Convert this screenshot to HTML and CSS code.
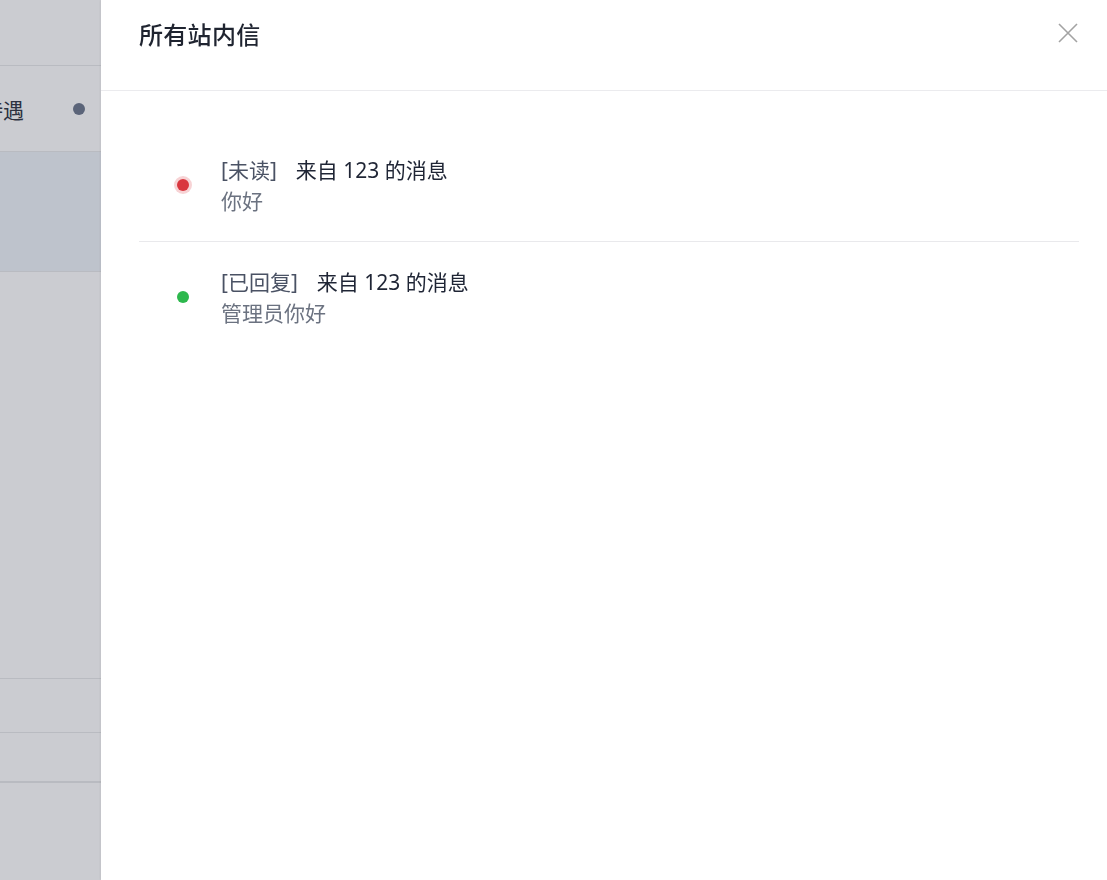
FILE: index.html
```html
<!DOCTYPE html>
<html lang="zh-CN">
<head>
<meta charset="utf-8">
<title>所有站内信</title>
<link rel="stylesheet" href="styles.css">
</head>
<body>
<div class="page">
  <aside class="side">
    <div class="side-top"></div>
    <div class="side-item">
      <span class="side-label">薪资待遇</span>
      <span class="side-dot"></span>
    </div>
    <div class="side-item side-item--active"></div>
    <div class="side-fill"></div>
    <div class="side-row"></div>
    <div class="side-row side-row--short"></div>
    <div class="side-rest"></div>
  </aside>
</div>

<section class="drawer">
  <header class="drawer-head">
    <h1 class="drawer-title">所有站内信</h1>
    <button class="drawer-close" aria-label="关闭">
      <svg width="20" height="20" viewBox="0 0 20 20"><path d="M1 1 L19 19 M19 1 L1 19" stroke="#a3a3a3" stroke-width="1.6" fill="none"/></svg>
    </button>
  </header>
  <ul class="msg-list">
    <li class="msg">
      <span class="msg-dot msg-dot--unread"></span>
      <div class="msg-body">
        <div class="msg-title"><span class="msg-status">[未读]</span>来自 123 的消息</div>
        <div class="msg-text">你好</div>
      </div>
    </li>
    <li class="msg">
      <span class="msg-dot msg-dot--replied"></span>
      <div class="msg-body">
        <div class="msg-title"><span class="msg-status">[已回复]</span>来自 123 的消息</div>
        <div class="msg-text">管理员你好</div>
      </div>
    </li>
  </ul>
</section>
</body>
</html>
```

FILE: styles.css
```css
* { box-sizing: border-box; }
html, body { margin: 0; padding: 0; height: 100%; }
body {
  font-family: "Noto Sans", "Noto Sans CJK SC", sans-serif;
  background: #cbccd1;
  overflow: hidden;
}
.page { height: 880px; display: flex; }
.side {
  width: 101px;
  display: flex;
  flex-direction: column;
  background: #cbccd1;
  overflow: hidden;
}
.side-top { height: 66px; border-bottom: 1px solid #b9bbc1; flex: none; }
.side-item {
  height: 86px;
  flex: none;
  display: flex;
  align-items: center;
  justify-content: space-between;
  padding-right: 16px;
  border-bottom: 1px solid #b9bbc1;
}
.side-label {
  margin-left: -60px;
  font-size: 21px;
  color: #2c3140;
  white-space: nowrap;
}
.side-dot {
  width: 12px; height: 12px; border-radius: 50%;
  background: #5b6479;
}
.side-item--active { height: 120px; background: #bec3cc; border-bottom: 1px solid #b9bbc1; }
.side-fill { height: 407px; flex: none; border-bottom: 1px solid #b9bbc1; }
.side-row { height: 54px; flex: none; border-bottom: 1px solid #b9bbc1; }
.side-row--short { height: 50px; border-bottom: 2px solid #b9bbc1; }
.side-rest { flex: 1; }

.drawer {
  position: fixed;
  top: 0; right: 0; bottom: 0;
  width: 1006px;
  background: #fff;
  box-shadow: -1px 0 2px rgba(0, 0, 0, 0.05);
  padding: 0 28px 0 38px;
}
.drawer-head {
  height: 91px;
  margin: 0 -28px 0 -38px;
  padding: 0 29px 0 38px;
  display: flex;
  align-items: center;
  justify-content: space-between;
  border-bottom: 1px solid #ebebee;
}
.drawer-title {
  margin: 0;
  margin-top: -24px;
  font-size: 24px;
  font-weight: 500;
  color: #1f2430;
  letter-spacing: 0.3px;
}
.drawer-close {
  margin-top: -24px;
  background: none;
  border: none;
  padding: 0;
  width: 20px; height: 20px;
  cursor: pointer;
}
.drawer-close svg { display: block; }
.msg-list { list-style: none; margin: 0; padding: 39px 0 0; }
.msg {
  display: flex;
  align-items: center;
  padding: 25px 0 24px 38px;
  border-bottom: 1px solid #e9e9ec;
}
.msg:last-child { border-bottom: none; }
.msg-dot {
  width: 12px; height: 12px; border-radius: 50%;
  flex: none;
  margin-right: 32px;
  margin-top: -2px;
}
.msg-dot--unread { background: #d9363e; box-shadow: 0 0 0 3px rgba(217, 54, 62, 0.22); }
.msg-dot--replied { background: #2db84d; }
.msg-body { font-size: 21px; line-height: 31px; }
.msg-title { color: #1f2535; }
.msg-status { color: #4a5264; margin-right: 19px; }
.msg-text { color: #6b7280; }
```
